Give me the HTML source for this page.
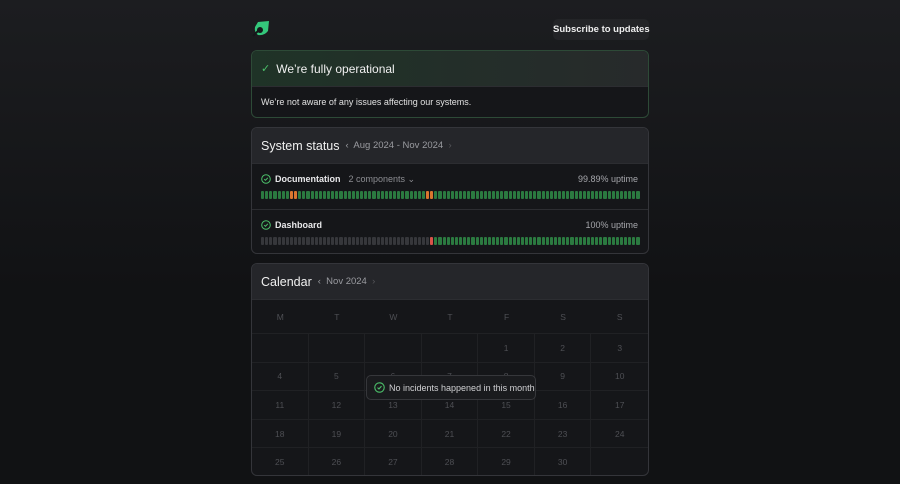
<!DOCTYPE html>
<html><head><meta charset="utf-8"><style>
*{box-sizing:border-box;margin:0;padding:0}
body{width:900px;height:484px;overflow:hidden;background:linear-gradient(#1c1d20,#111214 60%);font-family:"Liberation Sans",sans-serif;color:#e8e8ea;position:relative}
.wrap{position:absolute;left:251px;width:398px;top:0}
.logo{position:absolute;left:1px;top:20px}
.btn{position:absolute;right:0;top:19px;height:21px;width:96px;background:#232427;border-radius:5px;font-size:9.5px;font-weight:bold;color:#eee;text-align:center;line-height:21px;white-space:nowrap}
.card{position:absolute;left:0;width:398px;border:1px solid #34353a;border-radius:6px;overflow:hidden;background:#151619}
.hd{height:36px;background:#25262a;border-bottom:1px solid #2c2d31;display:flex;align-items:center;padding-left:9px;font-size:12.5px;color:#f0f0f0}
.sub{font-size:9.5px;color:#9a9ba0;margin-left:6px}
.row{height:45px;padding:8px 9px 0 9px;position:relative}
.row+.row{border-top:1px solid #2c2d31}
.lbl{display:flex;align-items:center;font-size:9px;font-weight:bold;height:14px}
.up{position:absolute;right:10px;top:10px;font-size:9px;color:#a5a6ab}
.bars{display:flex;gap:1px;height:8px;margin-top:5px}
.bars i{flex:1;background:#2b7a40;border-radius:1px}
.bars i.o{background:#d9762f}.bars i.g{background:#36373b}.bars i.r{background:#d9534a}
.cal{display:grid;grid-template-columns:repeat(7,1fr);}
.cal div{height:28.6px;border-right:1px solid #202124;border-bottom:1px solid #202124;font-size:8.5px;color:#4e4f54;display:flex;align-items:center;justify-content:center}
.cal div:nth-child(7n){border-right:none}
.cal .w{height:34px;border-right:none}
</style></head><body>
<div class="wrap">
<svg class="logo" width="18" height="18" viewBox="0 0 18 18"><path d="M6 2 L17 1 L16 11 Q12 16 6 15 Q2 12 3 7Z" fill="#34c77b"/><circle cx="8" cy="10" r="3" fill="#15171a"/><path d="M1 16 L6 11" stroke="#15171a" stroke-width="2"/></svg>
<div class="btn">Subscribe to updates</div>
<div class="card" style="top:50px;height:68px;border-color:#2d4a37">
<div class="hd" style="background:linear-gradient(90deg,#1f3327,#272a2b);font-size:12px"><span style="color:#4cc06a;margin-right:6px;font-size:11px">✓</span>We’re fully operational</div>
<div style="font-size:9px;padding:10px 9px;color:#e0e0e0">We’re not aware of any issues affecting our systems.</div>
</div>
<div class="card" style="top:127px;height:127px">
<div class="hd">System status <span class="sub">‹&nbsp; Aug 2024 - Nov 2024 &nbsp;<span style="color:#55565a">›</span></span></div>
<div class="row"><div class="lbl"><svg width="10" height="10" viewBox="0 0 10 10" style="margin-right:4px"><circle cx="5" cy="5" r="4.3" fill="none" stroke="#4cc06a" stroke-width="1"/><path d="M3.2 5.1 L4.5 6.3 L6.8 3.8" fill="none" stroke="#4cc06a" stroke-width="1"/></svg>Documentation<span style="font-weight:normal;color:#8c8d92;margin-left:8px">2 components ⌄</span></div><div class="up">99.89% uptime</div><div class="bars" id="b1"></div></div>
<div class="row"><div class="lbl"><svg width="10" height="10" viewBox="0 0 10 10" style="margin-right:4px"><circle cx="5" cy="5" r="4.3" fill="none" stroke="#4cc06a" stroke-width="1"/><path d="M3.2 5.1 L4.5 6.3 L6.8 3.8" fill="none" stroke="#4cc06a" stroke-width="1"/></svg>Dashboard</div><div class="up">100% uptime</div><div class="bars" id="b2"></div></div>
</div>
<div class="card" style="top:263px;height:213px">
<div class="hd">Calendar <span class="sub">‹&nbsp; Nov 2024 &nbsp;<span style="color:#55565a">›</span></span></div>
<div class="cal">
<div class="w">M</div><div class="w">T</div><div class="w">W</div><div class="w">T</div><div class="w">F</div><div class="w">S</div><div class="w">S</div>
<div></div><div></div><div></div><div></div><div>1</div><div>2</div><div>3</div>
<div>4</div><div>5</div><div>6</div><div>7</div><div>8</div><div>9</div><div>10</div>
<div>11</div><div>12</div><div>13</div><div>14</div><div>15</div><div>16</div><div>17</div>
<div>18</div><div>19</div><div>20</div><div>21</div><div>22</div><div>23</div><div>24</div>
<div>25</div><div>26</div><div>27</div><div>28</div><div>29</div><div>30</div><div></div>
</div>
<div style="position:absolute;left:114px;top:111px;width:170px;height:25px;background:#1a1b1e;border:1px solid #36373b;border-radius:5px;display:flex;align-items:center;padding-left:7px;font-size:9px;color:#d0d0d3;white-space:nowrap"><svg width="11" height="11" viewBox="0 0 10 10" style="margin-right:4px"><circle cx="5" cy="5" r="4.3" fill="none" stroke="#4cc06a" stroke-width="1"/><path d="M3.2 5.1 L4.5 6.3 L6.8 3.8" fill="none" stroke="#4cc06a" stroke-width="1"/></svg>No incidents happened in this month</div>
</div>
</div>
<script>
var b1='',b2='';for(var i=0;i<92;i++){b1+='<i'+((i==7||i==8||i==40||i==41)?' class="o"':'')+'></i>';b2+='<i'+(i<41?' class="g"':(i==41?' class="r"':''))+'></i>';}
document.getElementById('b1').innerHTML=b1;document.getElementById('b2').innerHTML=b2;
</script>
</body></html>
